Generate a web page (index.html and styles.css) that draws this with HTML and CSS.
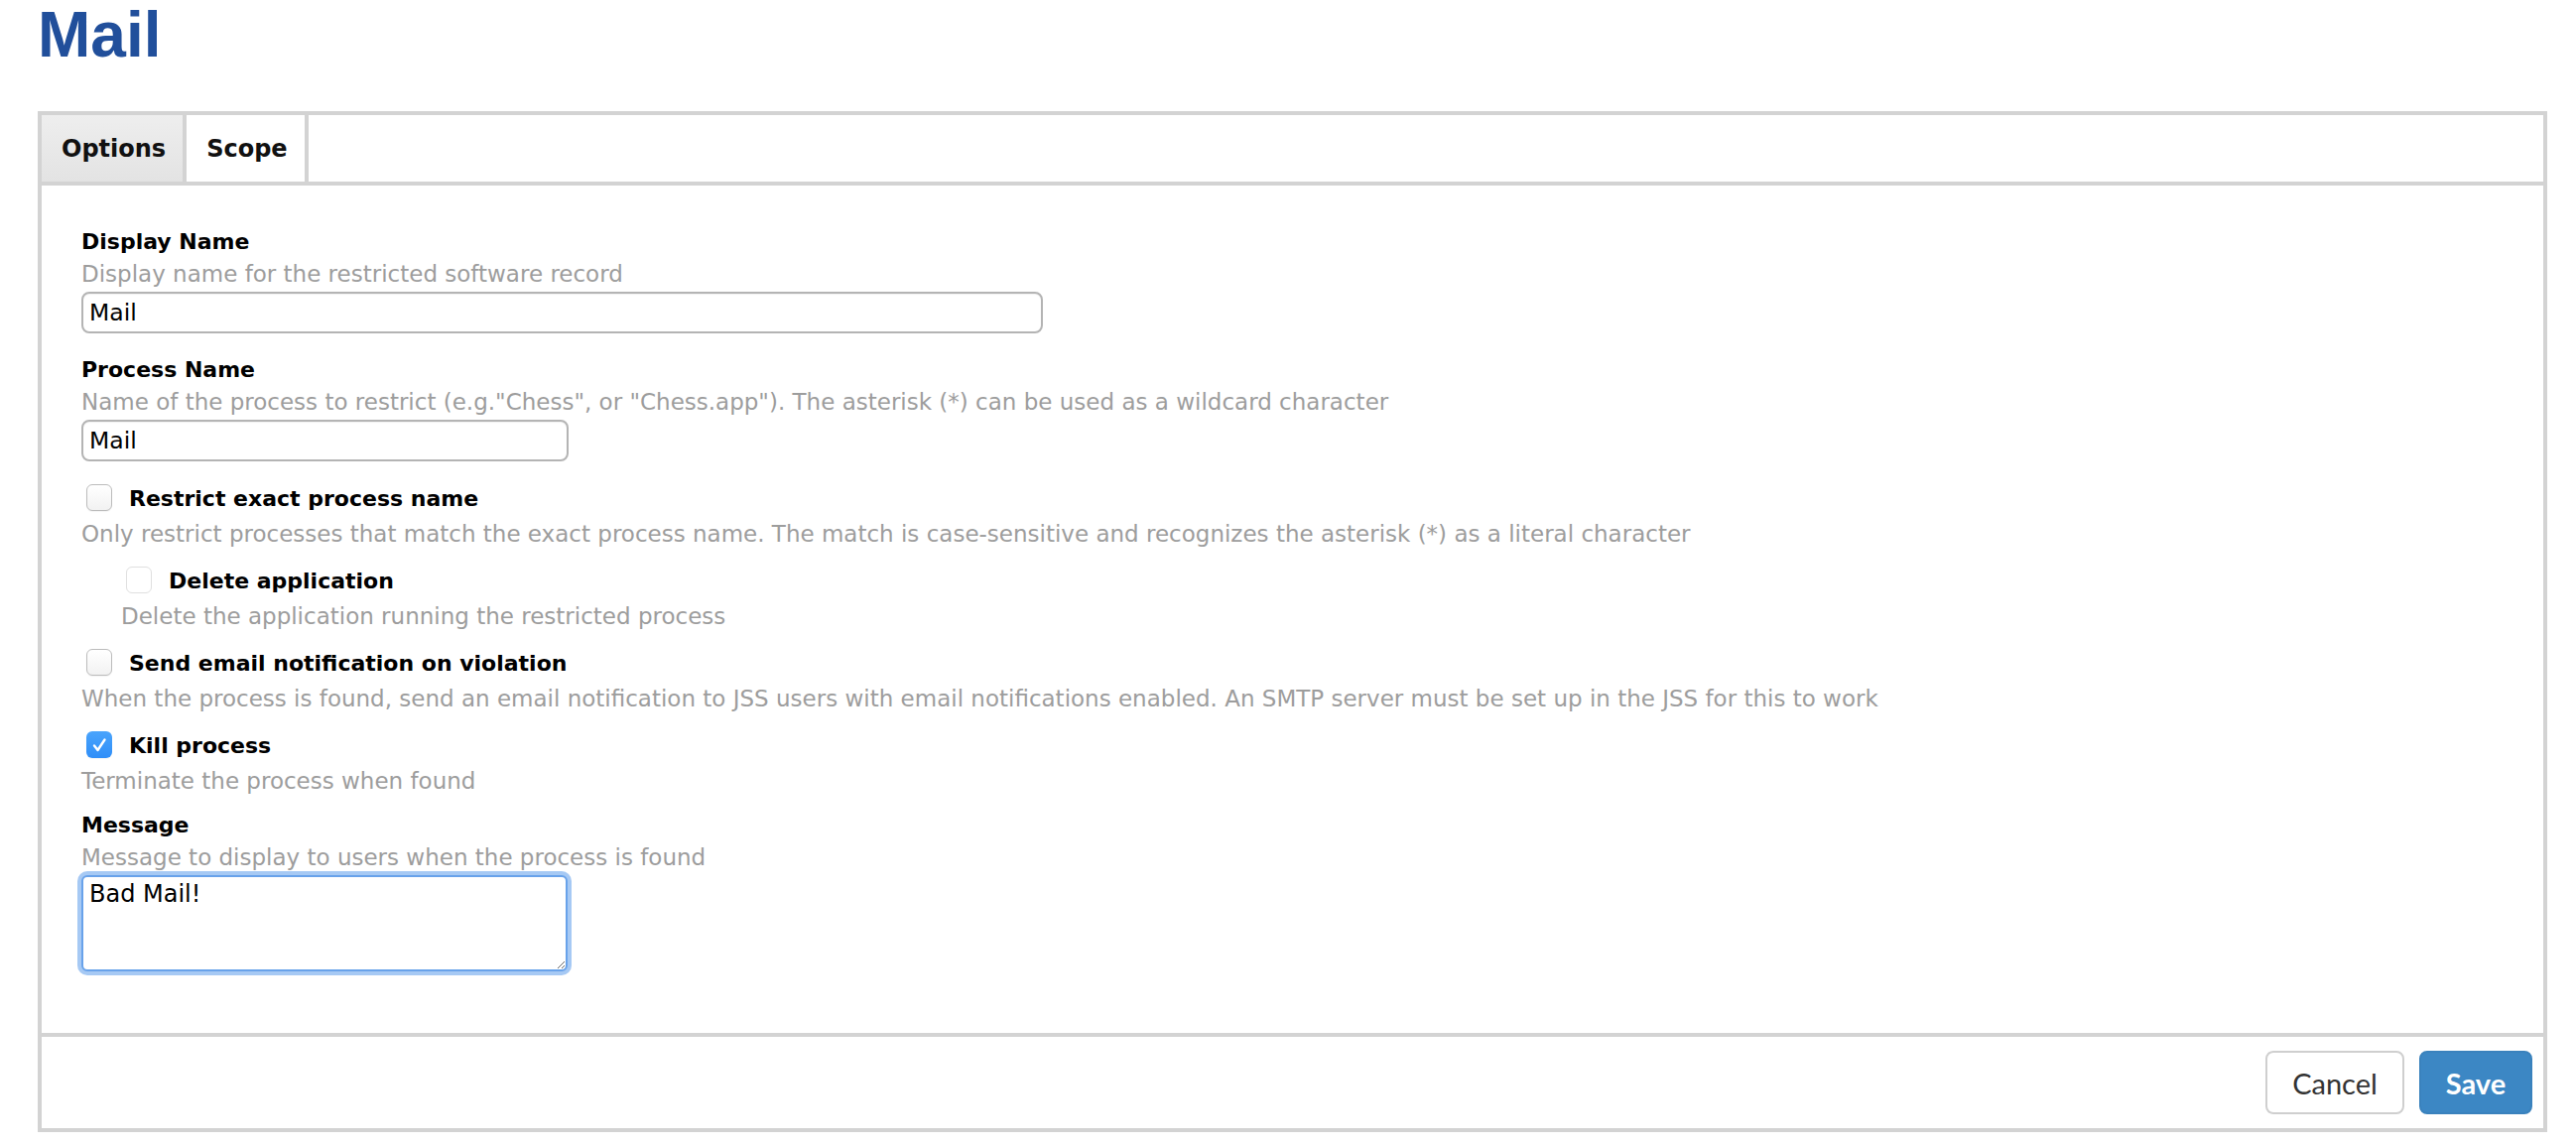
FILE: index.html
```html
<!DOCTYPE html>
<html lang="en">
<head>
<meta charset="utf-8">
<title>Mail</title>
<link rel="stylesheet" href="styles.css">
</head>
<body>
<h1 class="page-title">Mail</h1>
<div class="panel">
  <div class="tabs">
    <div class="tab tab-active">Options</div>
    <div class="tab">Scope</div>
  </div>
  <div class="panel-body">
    <div class="field">
      <div class="label">Display Name</div>
      <div class="desc">Display name for the restricted software record</div>
      <input class="text-input text-wide" type="text" value="Mail">
    </div>
    <div class="field field-next">
      <div class="label">Process Name</div>
      <div class="desc">Name of the process to restrict (e.g."Chess", or "Chess.app"). The asterisk (*) can be used as a wildcard character</div>
      <input class="text-input text-narrow" type="text" value="Mail">
    </div>
    <div class="check-field check-first">
      <div class="check-row">
        <span class="checkbox"></span>
        <span class="check-label">Restrict exact process name</span>
      </div>
      <div class="desc check-desc">Only restrict processes that match the exact process name. The match is case-sensitive and recognizes the asterisk (*) as a literal character</div>
    </div>
    <div class="check-field check-indent">
      <div class="check-row">
        <span class="checkbox checkbox-disabled"></span>
        <span class="check-label">Delete application</span>
      </div>
      <div class="desc check-desc">Delete the application running the restricted process</div>
    </div>
    <div class="check-field">
      <div class="check-row">
        <span class="checkbox"></span>
        <span class="check-label">Send email notification on violation</span>
      </div>
      <div class="desc check-desc">When the process is found, send an email notification to JSS users with email notifications enabled. An SMTP server must be set up in the JSS for this to work</div>
    </div>
    <div class="check-field">
      <div class="check-row">
        <span class="checkbox checkbox-checked"><svg viewBox="0 0 26 28" width="26" height="28"><path d="M8 14.5 L11.5 19 L18.5 8.5" fill="none" stroke="#ffffff" stroke-width="2.4" stroke-linecap="round" stroke-linejoin="round"/></svg></span>
        <span class="check-label">Kill process</span>
      </div>
      <div class="desc check-desc">Terminate the process when found</div>
    </div>
    <div class="field field-message">
      <div class="label">Message</div>
      <div class="desc">Message to display to users when the process is found</div>
      <textarea class="message-input">Bad Mail!</textarea>
    </div>
  </div>
  <div class="panel-footer">
    <button class="btn btn-cancel" type="button">Cancel</button>
    <button class="btn btn-save" type="button">Save</button>
  </div>
</div>
</body>
</html>
```
FILE: styles.css
```css
html, body {
  margin: 0;
  padding: 0;
  background: #ffffff;
}

body {
  font-family: "DejaVu Sans", "Noto Sans", sans-serif;
  color: #000000;
  padding: 0 29px 0 38px;
}

.page-title {
  margin: 0 0 42px 0;
  font-family: "Liberation Sans", Arial, sans-serif;
  font-weight: bold;
  font-size: 64px;
  line-height: 70px;
  color: #214f9b;
}

.panel {
  border: 4px solid #d3d3d3;
  background: #ffffff;
}

.tabs {
  display: flex;
  height: 67px;
  border-bottom: 4px solid #d3d3d3;
}

.tab {
  padding: 2px 17px 0 20px;
  line-height: 65px;
  font-size: 24px;
  font-weight: bold;
  color: #111111;
  border-right: 4px solid #d3d3d3;
  background: #ffffff;
}

.tab-active {
  background: linear-gradient(#eeeeee, #e3e3e3);
}

.panel-body {
  padding: 46px 40px 62px 40px;
}

.field-next {
  margin-top: 26px;
}

.label {
  font-size: 22px;
  font-weight: bold;
  line-height: 22px;
}

.desc {
  font-size: 23px;
  line-height: 26px;
  color: #9d9d9d;
  white-space: nowrap;
}

.label + .desc {
  margin-top: 8px;
}

.text-input {
  display: block;
  box-sizing: border-box;
  margin: 5px 0 0 0;
  height: 42px;
  padding: 0 6px;
  border: 2px solid #b4b4b4;
  border-radius: 8px;
  font-family: "DejaVu Sans", sans-serif;
  font-size: 23.5px;
  color: #000000;
  background: #ffffff;
  box-shadow: inset 0 1px 1px rgba(0, 0, 0, 0.06);
  outline: none;
}

.text-wide {
  width: 969px;
}

.text-narrow {
  width: 491px;
}

.check-field {
  margin-top: 20px;
}

.check-first {
  margin-top: 23px;
}

.check-indent {
  padding-left: 40px;
}

.check-row {
  display: flex;
  align-items: center;
  height: 27px;
  padding-left: 5px;
}

.checkbox {
  box-sizing: border-box;
  width: 26px;
  height: 27px;
  border: 1.5px solid #bcbcbc;
  border-radius: 6px;
  background: linear-gradient(#ffffff, #f2f2f2);
  box-shadow: 0 1px 1px rgba(0, 0, 0, 0.05);
  flex: none;
  display: flex;
  align-items: center;
  justify-content: center;
}

.checkbox-disabled {
  border-color: #e0e0e0;
  background: #ffffff;
  box-shadow: none;
}

.checkbox-checked {
  border: none;
  background: linear-gradient(#4aa4fc, #2f8ef8);
}

.checkbox-checked svg {
  display: block;
}

.check-label {
  margin-left: 17px;
  font-size: 22px;
  font-weight: bold;
  line-height: 27px;
  padding-top: 2px;
}

.check-desc {
  margin-top: 10px;
}

.field-message {
  margin-top: 21px;
}

.message-input {
  display: block;
  box-sizing: border-box;
  margin: 5px 0 0 0;
  width: 490px;
  height: 97px;
  padding: 3px 6px;
  border: 2px solid #68a2ea;
  border-radius: 6px;
  box-shadow: 0 0 0 4px #a6c9f4;
  font-family: "DejaVu Sans", sans-serif;
  font-size: 24px;
  line-height: 28px;
  color: #000000;
  background: #ffffff;
  outline: none;
}

.panel-footer {
  display: flex;
  justify-content: flex-end;
  align-items: center;
  gap: 15px;
  height: 92px;
  padding-right: 11px;
  border-top: 4px solid #d3d3d3;
}

.btn {
  box-sizing: border-box;
  height: 64px;
  padding: 0 24px;
  border-radius: 8px;
  font-family: "Lato", "DejaVu Sans", sans-serif;
  font-size: 29px;
  cursor: pointer;
}

.btn-cancel {
  min-width: 140px;
  border: 2px solid #cfcfcf;
  background: #ffffff;
  color: #333333;
}

.btn-save {
  min-width: 114px;
  border: 2px solid #3a82bd;
  background: #3c87c4;
  color: #ffffff;
  font-weight: bold;
}
```
